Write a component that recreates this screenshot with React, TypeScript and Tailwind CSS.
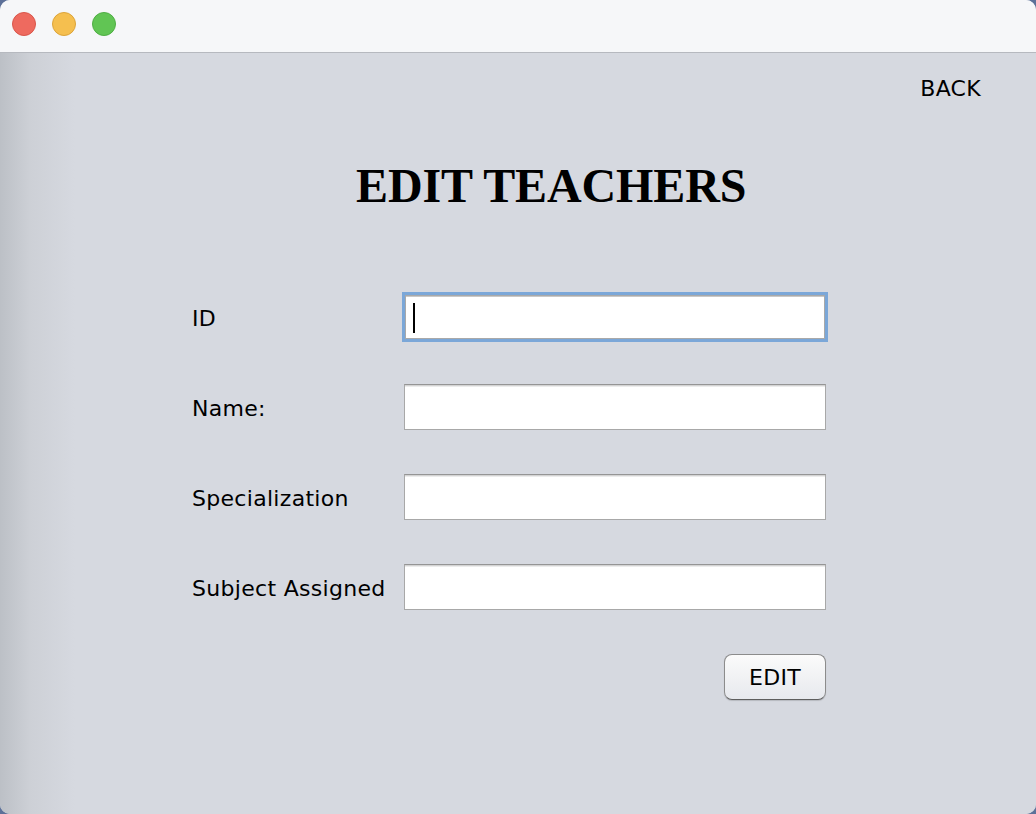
// App.tsx

const fields = [
  { label: 'ID', focused: true },
  { label: 'Name:' },
  { label: 'Specialization' },
  { label: 'Subject Assigned' },
]

// A macOS style text field, the first one holds focus
function Field({ focused }: { focused?: boolean }) {
  const ring = focused
    ? 'border-[#7ba7d8] shadow-[0_0_0_2px_#7ba7d8,inset_0_0_0_1px_#a9a9a9,inset_0_2px_0_0_#c8c8c8]'
    : 'border-[#a8a8a8] border-t-[#959595] shadow-[inset_0_1px_0_0_#d4d4d4,inset_0_2px_0_0_#ececec]'

  return (
    <div className={`relative h-[46px] w-[422px] border bg-white ${ring}`}>
      {focused && <span className="absolute left-[8px] top-[8px] h-[30px] w-[2px] bg-black" />}
    </div>
  )
}

export default function App() {
  return (
    <div className="min-h-[814px] w-[1036px] bg-[#5d7199]">
      <div className="flex h-[814px] w-[1036px] flex-col overflow-hidden rounded-[10px] bg-[#d6d9e0]">
        {/* --- Title bar --- */}
        <div className="flex h-[53px] shrink-0 items-start gap-[16px] border-b border-[#b6b9bf] bg-[#f6f7f9] pl-[12px] pt-[12px]">
          <span className="h-[24px] w-[24px] rounded-full border border-[#d9564b] bg-[#ee6a5f]" />
          <span className="h-[24px] w-[24px] rounded-full border border-[#dca43a] bg-[#f5bf4f]" />
          <span className="h-[24px] w-[24px] rounded-full border border-[#4fae44] bg-[#61c554]" />
        </div>

        {/* --- Window content --- */}
        <div className="flex flex-1 flex-col bg-[linear-gradient(to_right,#bcc0c6,#cdd0d6_30px,#d6d9e0_75px)] font-['DejaVu_Sans',sans-serif] text-[22px] tracking-[0.3px] text-black">
          <div className="flex justify-end pr-[55px] pt-[23px]">
            <span className="leading-[26px]">BACK</span>
          </div>

          <h1 className="ml-[356px] mt-[60px] font-['Liberation_Serif',serif] text-[48px] font-bold leading-[48px] tracking-[-0.1px] text-black">
            EDIT TEACHERS
          </h1>

          <div className="ml-[192px] mt-[84px] flex w-[634px] flex-col gap-[44px]">
            {fields.map((f) => (
              <div key={f.label} className="flex items-center">
                <span className="w-[212px] pt-[4px] leading-[26px]">{f.label}</span>
                <Field focused={f.focused} />
              </div>
            ))}

            <div className="flex justify-end">
              <button className="h-[46px] w-[102px] rounded-[8px] border border-[#8c8c8c] border-b-[#5e5e5e] bg-[linear-gradient(to_bottom,#fbfbfb,#f1f2f4_50%,#e7e9ee)] pt-[2px] text-[22px] leading-[26px] text-black shadow-[0_1px_1px_rgba(0,0,0,0.15)]">
                EDIT
              </button>
            </div>
          </div>
        </div>
      </div>
    </div>
  )
}
